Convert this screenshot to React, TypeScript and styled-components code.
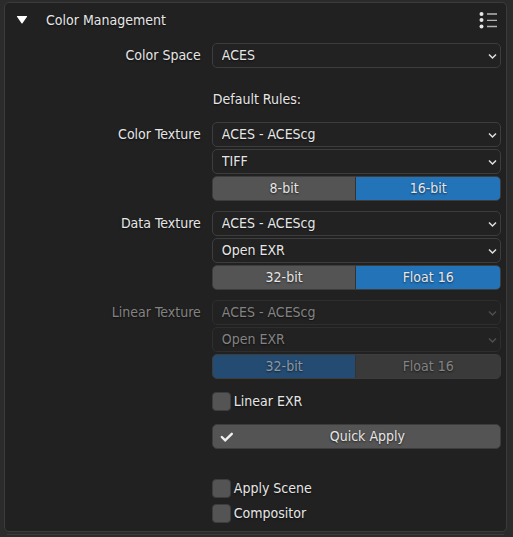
import React, { useState } from "react";
import styled, { createGlobalStyle } from "styled-components";

const GlobalStyle = createGlobalStyle`
  * { box-sizing: border-box; }
  html { height: 100%; }
  body {
    margin: 0;
    min-height: 100%;
    background: #2b2b2b;
    color: #e6e6e6;
    font: 14px/18px "DejaVu Sans Condensed", "Noto Sans", sans-serif;
    text-shadow: 0 1px 2px rgba(0, 0, 0, 0.6);
  }
  button, select, input { font: inherit; color: inherit; text-shadow: inherit; }
`;

const Page = styled.main`
  display: flex;
  flex-direction: column;
  gap: 2px;
  padding: 2px 6px 0 4px;
`;

const Panel = styled.section`
  border: 1px solid #3b3b3b;
  border-radius: 5px;
  background: #212121;
  padding: 3px 5px 8px 3px;
`;

const NextPanel = styled.div`
  height: 3px;
  margin: 0 3px;
  border-top: 1px solid #3b3b3b;
`;

const Header = styled.header`
  display: flex;
  align-items: center;
  height: 28px;
  margin-bottom: 9px;
  padding: 0 4px 0 8px;
`;

const Toggle = styled.button`
  display: flex;
  align-items: center;
  gap: 18px;
  padding: 0 0 1px;
  border: 0;
  background: none;
`;

const IconButton = styled.button`
  display: flex;
  margin-left: auto;
  padding: 0;
  border: 0;
  background: none;
`;

const Group = styled.div<{ $gap: number; $disabled?: boolean }>`
  display: grid;
  grid-template-columns: minmax(0, 2fr) minmax(0, 3fr);
  column-gap: 11px;
  margin-bottom: ${(p) => p.$gap}px;
  color: ${(p) => (p.$disabled ? "#838383" : "#e6e6e6")};
`;

const GroupLabel = styled.span`
  line-height: 25px;
  text-align: right;
  white-space: nowrap;
`;

const Stack = styled.div<{ $gap?: number }>`
  grid-column: 2;
  display: flex;
  flex-direction: column;
  gap: ${(p) => p.$gap ?? 2}px;
`;

const Heading = styled.p`
  margin: 0;
  padding-left: 1px;
  line-height: 20px;
`;

const SelectBox = styled.div`
  display: grid;
  align-items: center;
  height: 25px;
  > * { grid-area: 1 / 1; }
  > svg { justify-self: end; margin: 2px 4px 0 0; pointer-events: none; }
`;

const Select = styled.select`
  appearance: none;
  width: 100%;
  height: 25px;
  padding: 0 20px 2px 9px;
  border: 1px solid #3d3d3d;
  border-radius: 5px;
  background: #222222;
  &:disabled { opacity: 1; border-color: #2e2e2e; }
`;

const Segments = styled.div`
  display: grid;
  grid-template-columns: 1fr 1fr;
  height: 25px;
  border: 1px solid #3d3d3d;
  border-radius: 5px;
  overflow: hidden;
  background: #3a3a3a;
`;

const Segment = styled.button<{ $on: boolean }>`
  border: 0;
  padding: 0 0 1px;
  background: ${(p) => (p.$on ? "#2373b9" : "#545454")};
  &:first-child { border-right: 1px solid #333333; }
  &:disabled {
    color: ${(p) => (p.$on ? "#8d98a3" : "#838383")};
    background: ${(p) => (p.$on ? "#244c72" : "#3a3a3a")};
  }
`;

const CheckLabel = styled.label`
  display: flex;
  align-items: center;
  gap: 3px;
  height: 19px;
`;

const CheckText = styled.span`
  padding-bottom: 1px;
`;

const CheckBox = styled.input`
  appearance: none;
  width: 19px;
  height: 19px;
  margin: 0;
  border: 1px solid #3d3d3d;
  border-radius: 4px;
  background: #545454;
  &:checked { background: #2373b9; }
`;

const ApplyButton = styled.button`
  display: flex;
  align-items: center;
  height: 25px;
  padding: 0 0 0 7px;
  border: 1px solid #3d3d3d;
  border-radius: 5px;
  background: #545454;
`;

const ApplyText = styled.span`
  flex: 1;
  padding: 0 0 1px 1px;
`;

const Triangle = () => (
  <svg width="12" height="10" viewBox="0 0 12 10" aria-hidden="true">
    <path d="M1.300 1h9.400q.7 0 .3.7L6.500 8.200q-.5.6-1 0L1 1.700Q.6 1 1.300 1z" fill="#fff" />
  </svg>
);

const ListIcon = () => (
  <svg width="18" height="18" viewBox="0 0 18 18" aria-hidden="true">
    <g fill="#e6e6e6">
      <circle cx="2.500" cy="3" r="2" />
      <circle cx="2.500" cy="9" r="2" />
      <circle cx="2.500" cy="15.500" r="2" />
    </g>
    <path d="M8 3h10M8 9.300h10M8 15.500h10" stroke="#b5b5b5" strokeWidth="1.300" />
  </svg>
);

const Chevron = ({ dim }: { dim: boolean }) => (
  <svg width="9" height="7" viewBox="0 0 9 7" aria-hidden="true">
    <path d="M1 1.500l3.500 3.500L8 1.500" fill="none" stroke={dim ? "#4f4f4f" : "#e0e0e0"} strokeWidth="1.500" />
  </svg>
);

const Check = () => (
  <svg width="14" height="12" viewBox="0 0 14 12" aria-hidden="true">
    <path d="M1.800 6l3.400 3.400L11.800 2.800" fill="none" stroke="#f0f0f0" strokeWidth="2.400" strokeLinecap="round" />
  </svg>
);

function Dropdown({ label, options, disabled = false }: { label: string; options: string[]; disabled?: boolean }) {
  return (
    <SelectBox>
      <Select aria-label={label} disabled={disabled}>
        {options.map((o) => <option key={o}>{o}</option>)}
      </Select>
      <Chevron dim={disabled} />
    </SelectBox>
  );
}

interface TextureProps {
  label: string;
  format: string;
  depths: string[];
  initial: number;
  gap: number;
  disabled?: boolean;
}

function TextureRule({ label, format, depths, initial, gap, disabled = false }: TextureProps) {
  const [active, setActive] = useState(initial);
  return (
    <Group $gap={gap} $disabled={disabled} role="group" aria-label={label}>
      <GroupLabel>{label}</GroupLabel>
      <Stack>
        <Dropdown label={`${label} color space`} options={["ACES - ACEScg"]} disabled={disabled} />
        <Dropdown label={`${label} format`} options={[format]} disabled={disabled} />
        <Segments>
          {depths.map((d, i) => (
            <Segment key={d} type="button" $on={i === active} aria-pressed={i === active} disabled={disabled} onClick={() => setActive(i)}>
              {d}
            </Segment>
          ))}
        </Segments>
      </Stack>
    </Group>
  );
}

function Option({ text }: { text: string }) {
  return (
    <CheckLabel>
      <CheckBox type="checkbox" />
      <CheckText>{text}</CheckText>
    </CheckLabel>
  );
}

export default function App() {
  const [open, setOpen] = useState(true);
  return (
    <>
      <GlobalStyle />
      <Page>
        <Panel>
          <Header>
            <Toggle type="button" aria-expanded={open} onClick={() => setOpen(!open)}>
              <Triangle />
              Color Management
            </Toggle>
            <IconButton type="button" aria-label="Presets">
              <ListIcon />
            </IconButton>
          </Header>
          {open && (
            <>
              <Group $gap={21}>
                <GroupLabel>Color Space</GroupLabel>
                <Stack>
                  <Dropdown label="Color Space" options={["ACES"]} />
                </Stack>
              </Group>
              <Group $gap={13}>
                <Stack>
                  <Heading>Default Rules:</Heading>
                </Stack>
              </Group>
              <TextureRule label="Color Texture" format="TIFF" depths={["8-bit", "16-bit"]} initial={1} gap={10} />
              <TextureRule label="Data Texture" format="Open EXR" depths={["32-bit", "Float 16"]} initial={1} gap={10} />
              <TextureRule label="Linear Texture" format="Open EXR" depths={["32-bit", "Float 16"]} initial={0} gap={13} disabled />
              <Group $gap={30}>
                <Stack $gap={13}>
                  <Option text="Linear EXR" />
                  <ApplyButton type="button">
                    <Check />
                    <ApplyText>Quick Apply</ApplyText>
                  </ApplyButton>
                </Stack>
              </Group>
              <Group $gap={0}>
                <Stack $gap={6}>
                  <Option text="Apply Scene" />
                  <Option text="Compositor" />
                </Stack>
              </Group>
            </>
          )}
        </Panel>
        <NextPanel />
      </Page>
    </>
  );
}
